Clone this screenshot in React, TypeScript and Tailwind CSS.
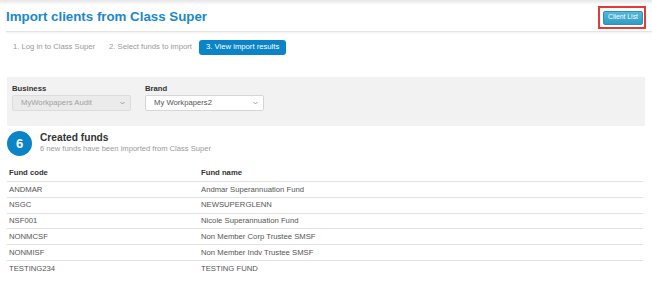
const funds = [
  { code: "ANDMAR", name: "Andmar Superannuation Fund" },
  { code: "NSGC", name: "NEWSUPERGLENN" },
  { code: "NSF001", name: "Nicole Superannuation Fund" },
  { code: "NONMCSF", name: "Non Member Corp Trustee SMSF" },
  { code: "NONMISF", name: "Non Member Indv Trustee SMSF" },
  { code: "TESTING234", name: "TESTING FUND" },
];

function Chevron() {
  return (
    <svg width="5" height="4" viewBox="0 0 5 4" className="shrink-0">
      <path d="M0.5 1 L2.5 3 L4.5 1" fill="none" stroke="#888" strokeWidth="0.8" />
    </svg>
  );
}

export default function App() {
  return (
    <div className="w-[652px] h-[282px] overflow-hidden bg-white bg-[linear-gradient(to_bottom,#e6e6e6,#ffffff_5px)] font-['Liberation_Sans',Arial,sans-serif] text-[7.7px] text-[#555]">
      {/* header */}
      <div className="ml-[6px] h-[32px] flex items-center justify-between pl-[1px] pr-[6px] border-b border-[#e4e4e4] shadow-[0_1px_2px_rgba(0,0,0,0.06)]">
        <h1 className="text-[13.3px] font-bold text-[#1a88cc] leading-none mt-[2px] -ml-[1px]">
          Import clients from Class Super
        </h1>
        <div className="border-2 border-[#e53935] h-[23px] w-[48px] flex items-center pl-[3px] mt-[4px]">
          <button className="h-[14px] w-[40px] rounded-[2px] bg-linear-to-b from-[#55b7da] to-[#2f9cc4] border border-[#2a92b8] text-white text-[6.8px] leading-none">
            Client List
          </button>
        </div>
      </div>

      {/* steps */}
      <div className="flex items-center ml-[6px] mt-[7px] h-[16px]">
        <span className="px-[7px] text-[#999]">1. Log in to Class Super</span>
        <span className="px-[7px] text-[#999]">2. Select funds to import</span>
        <span className="px-[7px] h-[15px] flex items-center rounded-[3px] bg-[#0a84c6] text-white">
          3. View import results
        </span>
      </div>

      {/* filters */}
      <div className="mx-[7px] mt-[22px] h-[49px] bg-[#f2f2f2] pl-[5px] pt-[6px] flex gap-[14px]">
        <div className="w-[119px]">
          <div className="font-bold text-[#333] h-[12px] leading-[12px]">Business</div>
          <div className="h-[16px] rounded-[2px] border border-[#dcdcdc] bg-[#ebebeb] flex items-center justify-between pl-[8px] pr-[5px] text-[#a0a0a0]">
            <span>MyWorkpapers Audit</span>
            <Chevron />
          </div>
        </div>
        <div className="w-[119px]">
          <div className="font-bold text-[#333] h-[12px] leading-[12px]">Brand</div>
          <div className="h-[16px] rounded-[2px] border border-[#d6d6d6] bg-white flex items-center justify-between pl-[8px] pr-[5px] text-[#555]">
            <span>My Workpapers2</span>
            <Chevron />
          </div>
        </div>
      </div>

      {/* created funds */}
      <div className="flex items-center ml-[7px] mt-[5px] gap-[8px]">
        <div className="w-[25px] h-[25px] rounded-full bg-[#0a84c6] text-white font-bold text-[13px] flex items-center justify-center">
          6
        </div>
        <div className="-mt-[3px]">
          <div className="text-[10.2px] font-semibold text-[#333] leading-[12px]">Created funds</div>
          <div className="text-[7.6px] text-[#9a9a9a] leading-[9px]">
            6 new funds have been imported from Class Super
          </div>
        </div>
      </div>

      {/* table */}
      <div className="ml-[7px] w-[636px] mt-[9px]">
        <div className="flex h-[16px] items-center font-bold text-[#333]">
          <div className="w-[192px] pl-[2px]">Fund code</div>
          <div className="pl-[2px]">Fund name</div>
        </div>
        {funds.map((f) => (
          <div key={f.code} className="flex h-[15.8px] items-center border-t border-[#e2e2e2]">
            <div className="w-[192px] pl-[2px]">{f.code}</div>
            <div className="pl-[2px]">{f.name}</div>
          </div>
        ))}
      </div>
    </div>
  );
}
